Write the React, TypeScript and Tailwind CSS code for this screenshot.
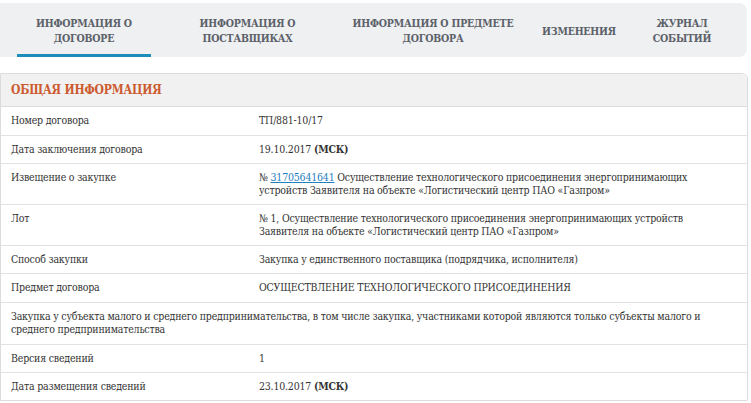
import React from 'react';

const font = { fontFamily: '"DejaVu Serif Condensed", "DejaVu Serif", serif' };

interface Row {
  label?: string;
  value: React.ReactNode;
  full?: boolean;
  tall?: boolean;
}

const tabs = [
  { lines: ['ИНФОРМАЦИЯ О', 'ДОГОВОРЕ'], width: 'w-[134px]', active: true },
  { lines: ['ИНФОРМАЦИЯ О', 'ПОСТАВЩИКАХ'], width: 'w-[193px]' },
  { lines: ['ИНФОРМАЦИЯ О ПРЕДМЕТЕ', 'ДОГОВОРА'], width: 'w-[178px]' },
  { lines: ['ИЗМЕНЕНИЯ'], width: 'w-[114px]' },
  { lines: ['ЖУРНАЛ', 'СОБЫТИЙ'], width: 'w-[92px]' },
];

const Msk = () => <span className="font-bold">(МСК)</span>;

const rows: Row[] = [
  { label: 'Номер договора', value: 'ТП/881-10/17', tall: true },
  { label: 'Дата заключения договора', value: <>19.10.2017 <Msk /></> },
  {
    label: 'Извещение о закупке',
    value: (
      <>
        № <span className="text-[#1f7fc0] underline">31705641641</span> Осуществление технологического присоединения энергопринимающих
        <br />
        устройств Заявителя на объекте «Логистический центр ПАО «Газпром»
      </>
    ),
  },
  {
    label: 'Лот',
    value: (
      <>
        № 1, Осуществление технологического присоединения энергопринимающих устройств
        <br />
        Заявителя на объекте «Логистический центр ПАО «Газпром»
      </>
    ),
  },
  { label: 'Способ закупки', value: 'Закупка у единственного поставщика (подрядчика, исполнителя)' },
  { label: 'Предмет договора', value: 'ОСУЩЕСТВЛЕНИЕ ТЕХНОЛОГИЧЕСКОГО ПРИСОЕДИНЕНИЯ', tall: true },
  {
    full: true,
    tall: true,
    value: (
      <>
        Закупка у субъекта малого и среднего предпринимательства, в том числе закупка, участниками которой являются только субъекты малого и
        <br />
        среднего предпринимательства
      </>
    ),
  },
  { label: 'Версия сведений', value: '1' },
  { label: 'Дата размещения сведений', value: <>23.10.2017 <Msk /></> },
];

export default function App() {
  return (
    <div className="w-[751px] h-[403px] bg-white overflow-hidden" style={font}>
      {/* Tabs */}
      <div className="pt-[3px] w-[747px]">
        <div className="flex h-[54px] bg-[#eef0f2] rounded-r-lg pl-[17px]">
          {tabs.map((t) => (
            <div
              key={t.lines[0] + t.lines.length}
              className={`${t.width} shrink-0 flex flex-col items-center justify-center pt-[5px] text-[10.5px] leading-[15px] tracking-[-0.2px] font-bold text-[#5c6169] whitespace-nowrap ${
                t.active ? 'border-b-[3px] border-[#1b8dba]' : 'border-b-[3px] border-transparent'
              }`}
            >
              {t.lines.map((l) => (
                <span key={l}>{l}</span>
              ))}
            </div>
          ))}
        </div>
      </div>

      {/* Panel */}
      <div className="mt-[16px] w-[748px] border border-[#dcdcdc] rounded-tr-md text-[10.5px] leading-[13px] tracking-[-0.2px] text-[#333]">
        <div className="h-[33px] bg-[#f1f1f1] border-b border-[#dcdcdc] flex items-center px-[10px] rounded-tr-md">
          <span className="text-[12px] font-bold tracking-[-0.2px] text-[#cc5a2f]">ОБЩАЯ ИНФОРМАЦИЯ</span>
        </div>
        {rows.map((r, i) => (
          <div
            key={i}
            className={`flex pt-[7px] ${r.tall ? 'pb-[8px]' : 'pb-[7px]'} ${i < rows.length - 1 ? 'border-b border-[#e2e2e2]' : ''}`}
          >
            {r.full ? (
              <div className="pl-[10px] whitespace-nowrap">{r.value}</div>
            ) : (
              <>
                <div className="w-[258px] shrink-0 pl-[10px]">{r.label}</div>
                <div className="whitespace-nowrap">{r.value}</div>
              </>
            )}
          </div>
        ))}
      </div>
    </div>
  );
}
